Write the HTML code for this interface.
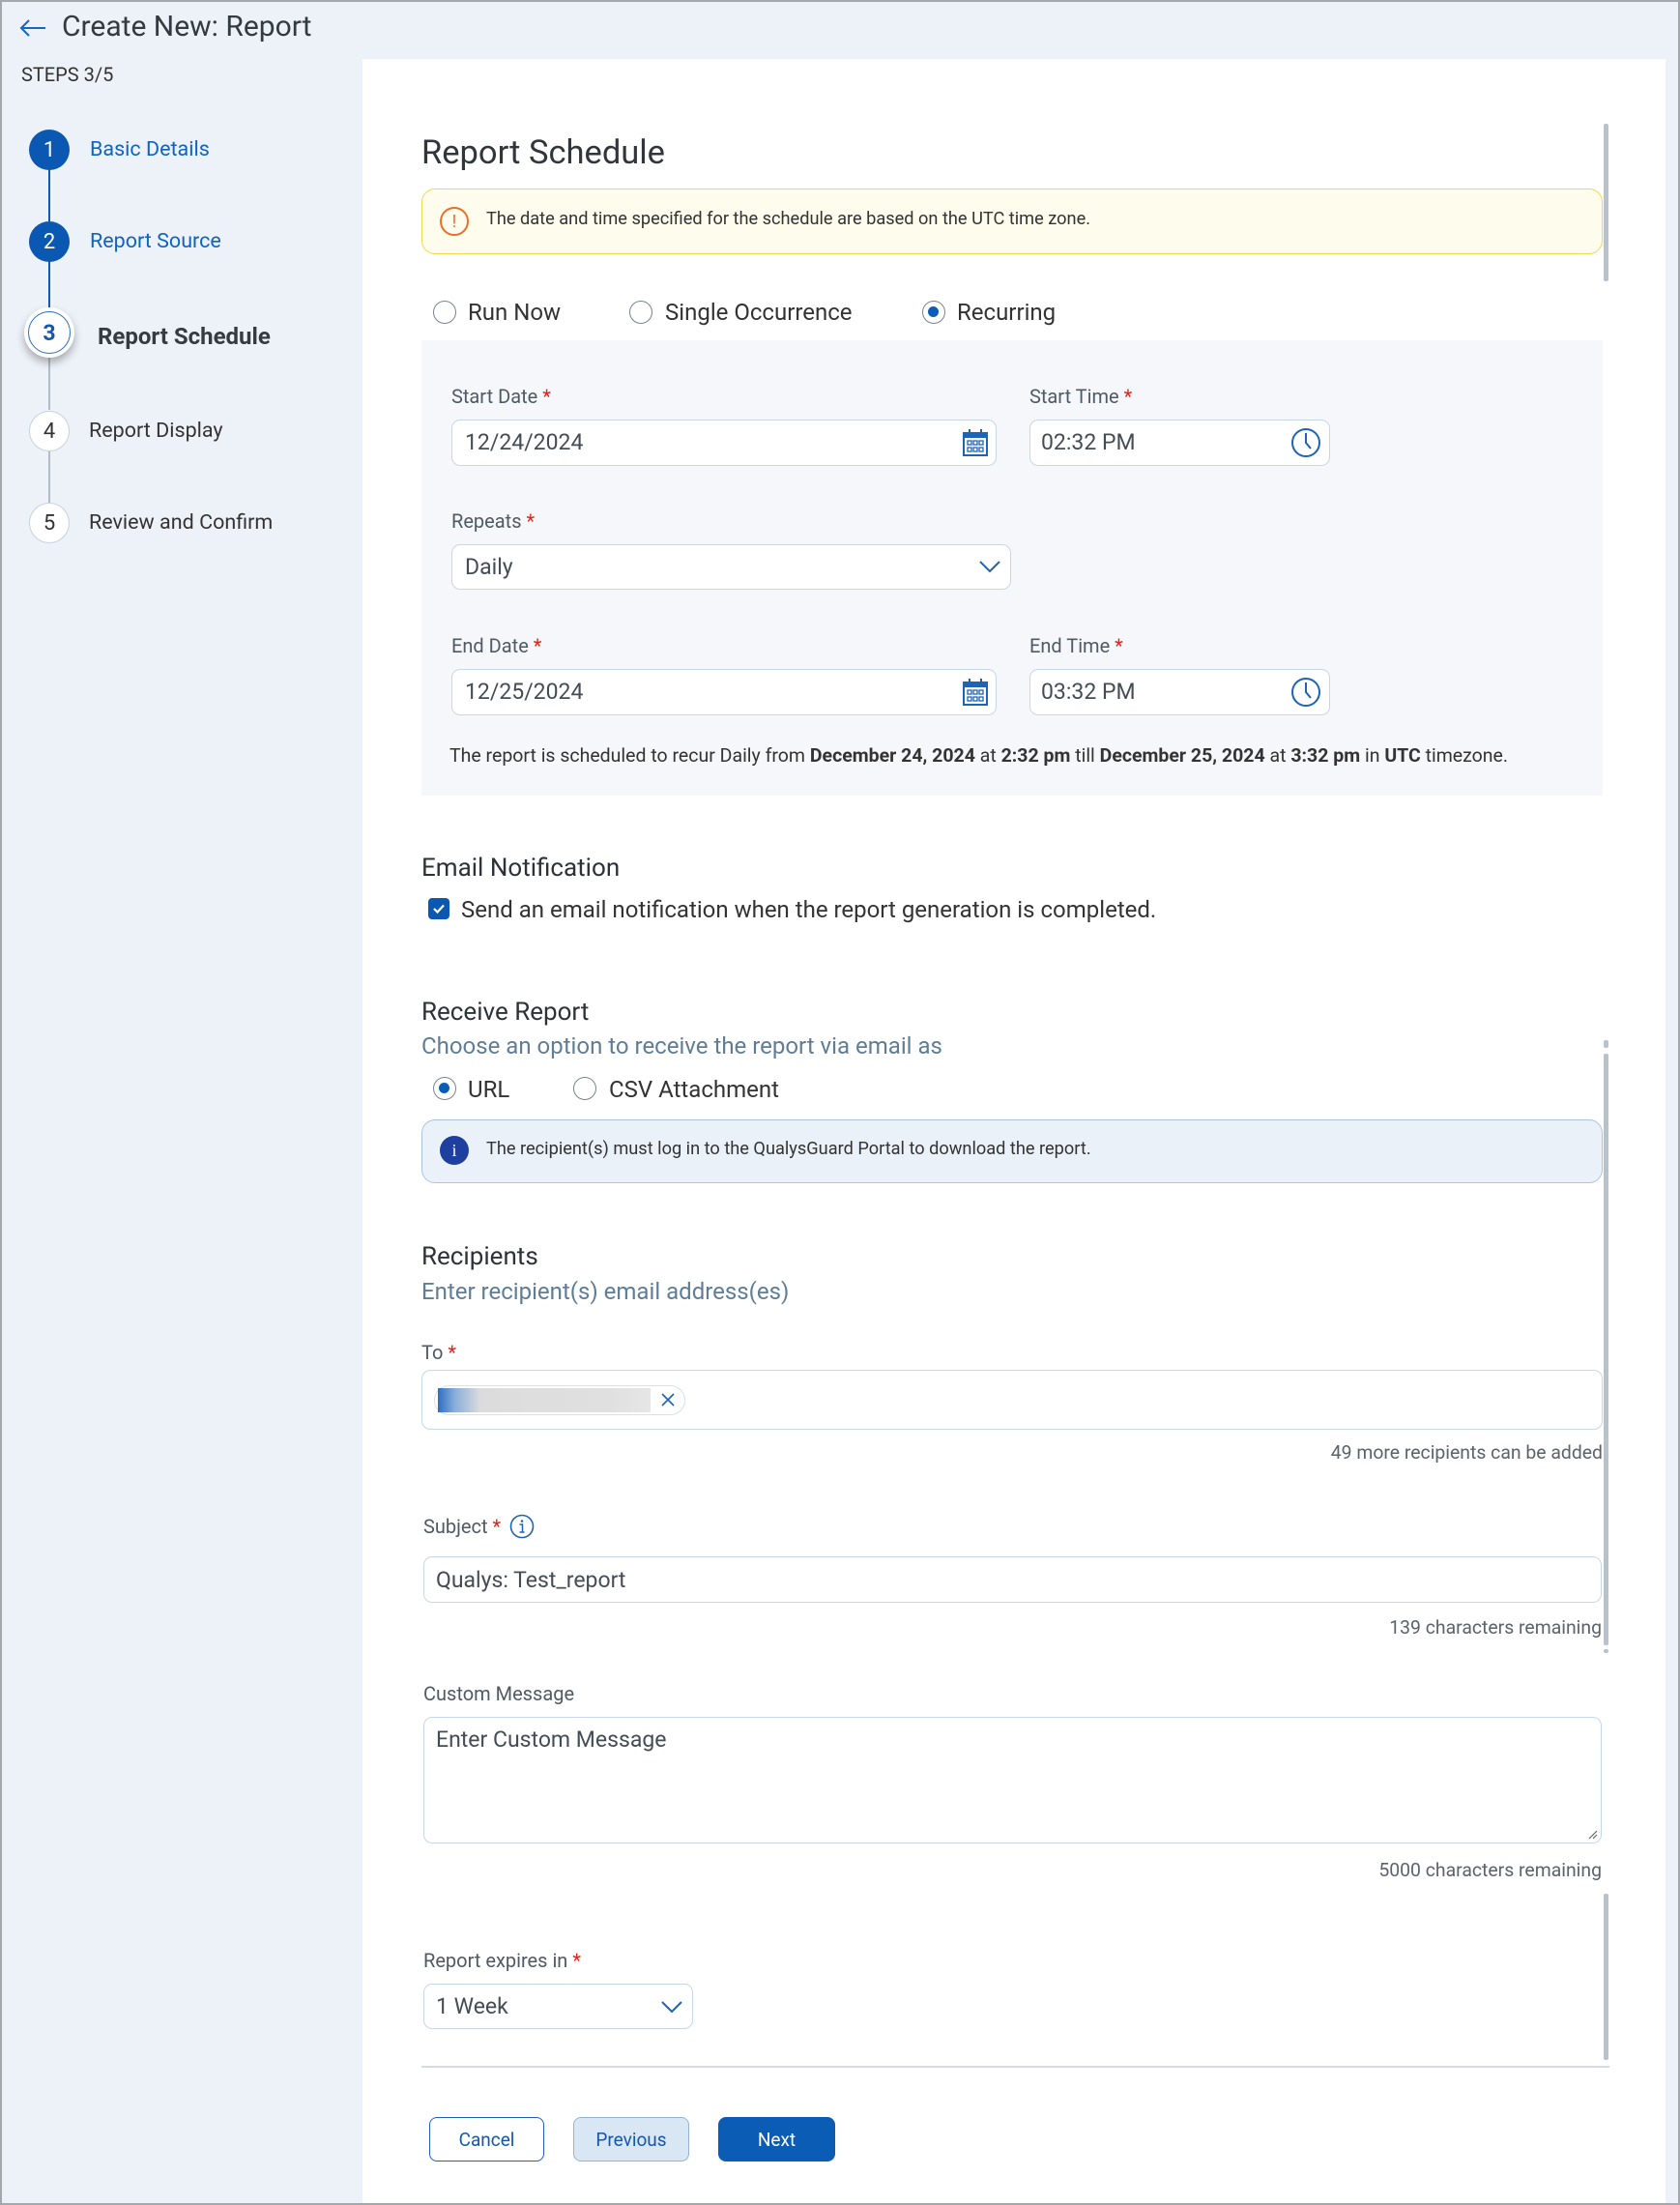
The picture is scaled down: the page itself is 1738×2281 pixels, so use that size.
<!DOCTYPE html>
<html><head><meta charset="utf-8"><style>
*{box-sizing:border-box;margin:0;padding:0}
body{width:1738px;height:2281px;position:relative;overflow:hidden;background:#edf2f9;font-family:"Roboto","Liberation Sans",sans-serif;color:#333}
.frame{position:absolute;left:0;top:0;width:1738px;height:2281px;border:2px solid #a4a7ab;z-index:10;pointer-events:none}
.a{position:absolute;white-space:nowrap}
.t{position:absolute;white-space:nowrap;line-height:30px;height:30px}
.circ{position:absolute;border-radius:50%;display:flex;align-items:center;justify-content:center;font-size:22px}
.vline{position:absolute;width:2px}
.lbl{font-size:20px;color:#505a64}
.req{color:#e0251b}
.inp{position:absolute;background:#fff;border:1.5px solid #c6d7ec;border-radius:9px}
.inptxt{position:absolute;font-size:23px;color:#444c55;line-height:30px}
.radio{position:absolute;width:24px;height:24px;border-radius:50%;border:1.5px solid #7b838c;background:#fff}
.radio.on::after{content:"";position:absolute;left:5px;top:5px;width:11px;height:11px;border-radius:50%;background:#0a5cb8}
.h2{font-size:26px;color:#2c3238}
.sub{font-size:24px;color:#5f7d96}
.hint{font-size:19.4px;color:#5b636b}
.btn{position:absolute;height:46px;border-radius:8px;font-size:19px;display:flex;align-items:center;justify-content:center}
.sb{position:absolute;left:1659px;width:5px;background:#b7c3cc;border-radius:2px}
</style></head><body>
<div class="frame"></div>

<svg class="a" style="left:19px;top:17px" width="30" height="24" viewBox="0 0 30 24"><path d="M28 12H3M11 4L3 12L11 20" fill="none" stroke="#1a64c2" stroke-width="2"/></svg>
<div class="t" style="left:64px;top:12px;font-size:30px;line-height:32px;height:32px;color:#333a40">Create New: Report</div>
<div class="t" style="left:22px;top:62px;font-size:20px;color:#333">STEPS 3/5</div>

<div class="vline" style="left:50px;top:175px;height:54px;background:#0f5bb4"></div>
<div class="vline" style="left:50px;top:270px;height:48px;background:#0f5bb4"></div>
<div class="vline" style="left:50px;top:370px;height:54px;background:#b3bcc6"></div>
<div class="vline" style="left:50px;top:466px;height:54px;background:#b3bcc6"></div>

<div class="circ" style="left:30px;top:134px;width:42px;height:42px;background:#0b58b2;color:#fff">1</div>
<div class="t lbl" style="left:93px;top:140px;color:#0f63c2;font-size:21.5px">Basic Details</div>
<div class="circ" style="left:30px;top:229px;width:42px;height:42px;background:#0b58b2;color:#fff">2</div>
<div class="t lbl" style="left:93px;top:235px;color:#0f63c2;font-size:21.5px">Report Source</div>
<div class="circ" style="left:25px;top:318px;width:52px;height:52px;background:#fff;box-shadow:0 5px 9px rgba(0,0,0,.3)"><div style="width:44px;height:44px;border-radius:50%;border:1.5px solid #2a6fc4;display:flex;align-items:center;justify-content:center;color:#1558b0;font-weight:bold;font-size:23px">3</div></div>
<div class="t" style="left:101px;top:333px;font-size:24px;font-weight:bold;color:#353b41">Report Schedule</div>
<div class="circ" style="left:30px;top:425px;width:42px;height:42px;background:#fff;border:1.5px solid #c7d2de;color:#333">4</div>
<div class="t lbl" style="left:92px;top:431px;color:#333;font-size:21.5px">Report Display</div>
<div class="circ" style="left:30px;top:520px;width:42px;height:42px;background:#fff;border:1.5px solid #c7d2de;color:#333">5</div>
<div class="t lbl" style="left:92px;top:526px;color:#333;font-size:21.5px">Review and Confirm</div>

<div class="a" style="left:375px;top:61px;width:1348px;height:2220px;background:#fff"></div>

<div class="t" style="left:436px;top:138px;font-size:34.5px;line-height:40px;height:40px;color:#30363c">Report Schedule</div>
<div class="sb" style="top:128px;height:163px"></div>

<div class="a" style="left:436px;top:195px;width:1222px;height:68px;background:#fefcec;border:1.5px solid #f3d64f;border-radius:14px"></div>
<div class="circ" style="left:455px;top:214px;width:30px;height:30px;border:2px solid #e8702a;color:#e8702a;font-size:18px">!</div>
<div class="t" style="left:503px;top:212px;font-size:18.2px;color:#333">The date and time specified for the schedule are based on the UTC time zone.</div>

<div class="radio" style="left:448px;top:311px"></div>
<div class="t" style="left:484px;top:308px;font-size:24px;color:#333">Run Now</div>
<div class="radio" style="left:651px;top:311px"></div>
<div class="t" style="left:688px;top:308px;font-size:24px;color:#333">Single Occurrence</div>
<div class="radio on" style="left:954px;top:311px"></div>
<div class="t" style="left:990px;top:308px;font-size:24px;color:#333">Recurring</div>

<div class="a" style="left:436px;top:352px;width:1222px;height:471px;background:#f5f7fa"></div>

<div class="t lbl" style="left:467px;top:395px">Start Date <span class="req">*</span></div>
<div class="inp" style="left:467px;top:434px;width:564px;height:48px"></div>
<div class="inptxt" style="left:481px;top:443px">12/24/2024</div>
<svg class="a" style="left:995px;top:443px" width="28" height="30" viewBox="0 0 28 30"><rect x="2" y="5" width="24" height="23" fill="#fff" stroke="#1f63b7" stroke-width="2"/><rect x="2" y="5" width="24" height="5" fill="#1f63b7"/><path d="M8 1v6M20 1v6" stroke="#1f63b7" stroke-width="2"/><g fill="none" stroke="#1f63b7" stroke-width="1.3"><rect x="6" y="13" width="4" height="4"/><rect x="12" y="13" width="4" height="4"/><rect x="18" y="13" width="4" height="4"/><rect x="6" y="20" width="4" height="4"/><rect x="12" y="20" width="4" height="4"/><rect x="18" y="20" width="4" height="4"/></g></svg>

<div class="t lbl" style="left:1065px;top:395px">Start Time <span class="req">*</span></div>
<div class="inp" style="left:1065px;top:434px;width:311px;height:48px"></div>
<div class="inptxt" style="left:1077px;top:443px">02:32 PM</div>
<svg class="a" style="left:1335px;top:442px" width="32" height="32" viewBox="0 0 32 32"><circle cx="16" cy="16" r="14" fill="none" stroke="#1f63b7" stroke-width="2"/><path d="M16 6v10l5 6" fill="none" stroke="#1f63b7" stroke-width="2"/></svg>

<div class="t lbl" style="left:467px;top:524px">Repeats <span class="req">*</span></div>
<div class="inp" style="left:467px;top:563px;width:579px;height:47px"></div>
<div class="inptxt" style="left:481px;top:572px">Daily</div>
<svg class="a" style="left:1013px;top:579px" width="22" height="14" viewBox="0 0 22 14"><path d="M1 2l10 10L21 2" fill="none" stroke="#1f63b7" stroke-width="2"/></svg>

<div class="t lbl" style="left:467px;top:653px">End Date <span class="req">*</span></div>
<div class="inp" style="left:467px;top:692px;width:564px;height:48px"></div>
<div class="inptxt" style="left:481px;top:701px">12/25/2024</div>
<svg class="a" style="left:995px;top:701px" width="28" height="30" viewBox="0 0 28 30"><rect x="2" y="5" width="24" height="23" fill="#fff" stroke="#1f63b7" stroke-width="2"/><rect x="2" y="5" width="24" height="5" fill="#1f63b7"/><path d="M8 1v6M20 1v6" stroke="#1f63b7" stroke-width="2"/><g fill="none" stroke="#1f63b7" stroke-width="1.3"><rect x="6" y="13" width="4" height="4"/><rect x="12" y="13" width="4" height="4"/><rect x="18" y="13" width="4" height="4"/><rect x="6" y="20" width="4" height="4"/><rect x="12" y="20" width="4" height="4"/><rect x="18" y="20" width="4" height="4"/></g></svg>

<div class="t lbl" style="left:1065px;top:653px">End Time <span class="req">*</span></div>
<div class="inp" style="left:1065px;top:692px;width:311px;height:48px"></div>
<div class="inptxt" style="left:1077px;top:701px">03:32 PM</div>
<svg class="a" style="left:1335px;top:700px" width="32" height="32" viewBox="0 0 32 32"><circle cx="16" cy="16" r="14" fill="none" stroke="#1f63b7" stroke-width="2"/><path d="M16 6v10l5 6" fill="none" stroke="#1f63b7" stroke-width="2"/></svg>

<div class="t" style="left:465px;top:767px;font-size:19.5px;color:#333">The report is scheduled to recur Daily from <b>December 24, 2024</b> at <b>2:32 pm</b> till <b>December 25, 2024</b> at <b>3:32 pm</b> in <b>UTC</b> timezone.</div>

<div class="t h2" style="left:436px;top:883px">Email Notification</div>
<div class="a" style="left:443px;top:929px;width:22px;height:22px;border-radius:4px;background:#0b58b2"></div>
<svg class="a" style="left:446px;top:932px" width="16" height="16" viewBox="0 0 16 16"><path d="M3 8l3.5 3.5L13 4.5" fill="none" stroke="#fff" stroke-width="2.2"/></svg>
<div class="t" style="left:477px;top:926px;font-size:24px;color:#333">Send an email notification when the report generation is completed.</div>

<div class="t h2" style="left:436px;top:1032px">Receive Report</div>
<div class="t sub" style="left:436px;top:1067px">Choose an option to receive the report via email as</div>
<div class="radio on" style="left:448px;top:1114px"></div>
<div class="t" style="left:484px;top:1112px;font-size:24px;color:#333">URL</div>
<div class="radio" style="left:593px;top:1114px"></div>
<div class="t" style="left:630px;top:1112px;font-size:24px;color:#333">CSV Attachment</div>

<div class="sb" style="top:1076px;height:8px"></div>
<div class="sb" style="top:1090px;height:612px"></div>

<div class="a" style="left:436px;top:1158px;width:1222px;height:66px;background:#ebf1f9;border:1.5px solid #a9c4e4;border-radius:14px"></div>
<div class="circ" style="left:455px;top:1175px;width:30px;height:30px;background:#1e3ea0;color:#fff;font-size:18px;font-family:'Liberation Serif',serif">i</div>
<div class="t" style="left:503px;top:1174px;font-size:18.2px;color:#333">The recipient(s) must log in to the QualysGuard Portal to download the report.</div>

<div class="t h2" style="left:436px;top:1285px">Recipients</div>
<div class="t sub" style="left:436px;top:1321px">Enter recipient(s) email address(es)</div>
<div class="t lbl" style="left:436px;top:1384px">To <span class="req">*</span></div>
<div class="inp" style="left:436px;top:1417px;width:1222px;height:62px"></div>
<div class="a" style="left:449px;top:1433px;width:260px;height:31px;border:1px solid #d8e0ea;border-radius:16px;background:#fff"></div>
<div class="a" style="left:453px;top:1436px;width:220px;height:25px;background:linear-gradient(90deg,#2d6ec0 0%,#8aaedb 8%,#dcdcdc 20%,#e0e0e0 80%,#e6e6e6 100%)"></div>
<svg class="a" style="left:683px;top:1440px" width="16" height="16" viewBox="0 0 16 16"><path d="M2 2l12 12M14 2L2 14" stroke="#1f63b7" stroke-width="1.6"/></svg>
<div class="t hint" style="right:80px;top:1488px">49 more recipients can be added</div>

<div class="t lbl" style="left:438px;top:1564px">Subject <span class="req">*</span></div>
<svg class="a" style="left:527px;top:1566px" width="26" height="26" viewBox="0 0 26 26"><circle cx="13" cy="13" r="11.5" fill="none" stroke="#1f63b7" stroke-width="1.6"/><circle cx="13" cy="7.5" r="1.3" fill="#1f63b7"/><path d="M10.5 11h3v8M10.5 19h5" fill="none" stroke="#1f63b7" stroke-width="1.5"/></svg>
<div class="inp" style="left:438px;top:1610px;width:1219px;height:48px"></div>
<div class="inptxt" style="left:451px;top:1620px">Qualys: Test_report</div>
<div class="t hint" style="right:81px;top:1669px">139 characters remaining</div>
<div class="sb" style="top:1706px;height:4px"></div>

<div class="t lbl" style="left:438px;top:1737px">Custom Message</div>
<div class="inp" style="left:438px;top:1776px;width:1219px;height:131px"></div>
<div class="inptxt" style="left:451px;top:1785px">Enter Custom Message</div>
<svg class="a" style="left:1641px;top:1891px" width="12" height="12" viewBox="0 0 12 12"><path d="M11 3L3 11M11 7L7 11" stroke="#666" stroke-width="1.2"/></svg>
<div class="t hint" style="right:81px;top:1920px">5000 characters remaining</div>

<div class="sb" style="top:1959px;height:172px"></div>

<div class="t lbl" style="left:438px;top:2013px">Report expires in <span class="req">*</span></div>
<div class="inp" style="left:438px;top:2052px;width:279px;height:47px"></div>
<div class="inptxt" style="left:451px;top:2061px">1 Week</div>
<svg class="a" style="left:684px;top:2069px" width="22" height="14" viewBox="0 0 22 14"><path d="M1 2l10 10L21 2" fill="none" stroke="#1f63b7" stroke-width="2"/></svg>

<div class="a" style="left:436px;top:2137px;width:1229px;height:1.5px;background:#d5dbe1"></div>

<div class="btn" style="left:444px;top:2190px;width:119px;border:1.5px solid #1f63b7;color:#1558b0;background:#fff">Cancel</div>
<div class="btn" style="left:593px;top:2190px;width:120px;border:1.5px solid #93b3d8;color:#1558b0;background:#d9e6f4">Previous</div>
<div class="btn" style="left:743px;top:2190px;width:121px;background:#0b5cb4;color:#fff">Next</div>
</body></html>
